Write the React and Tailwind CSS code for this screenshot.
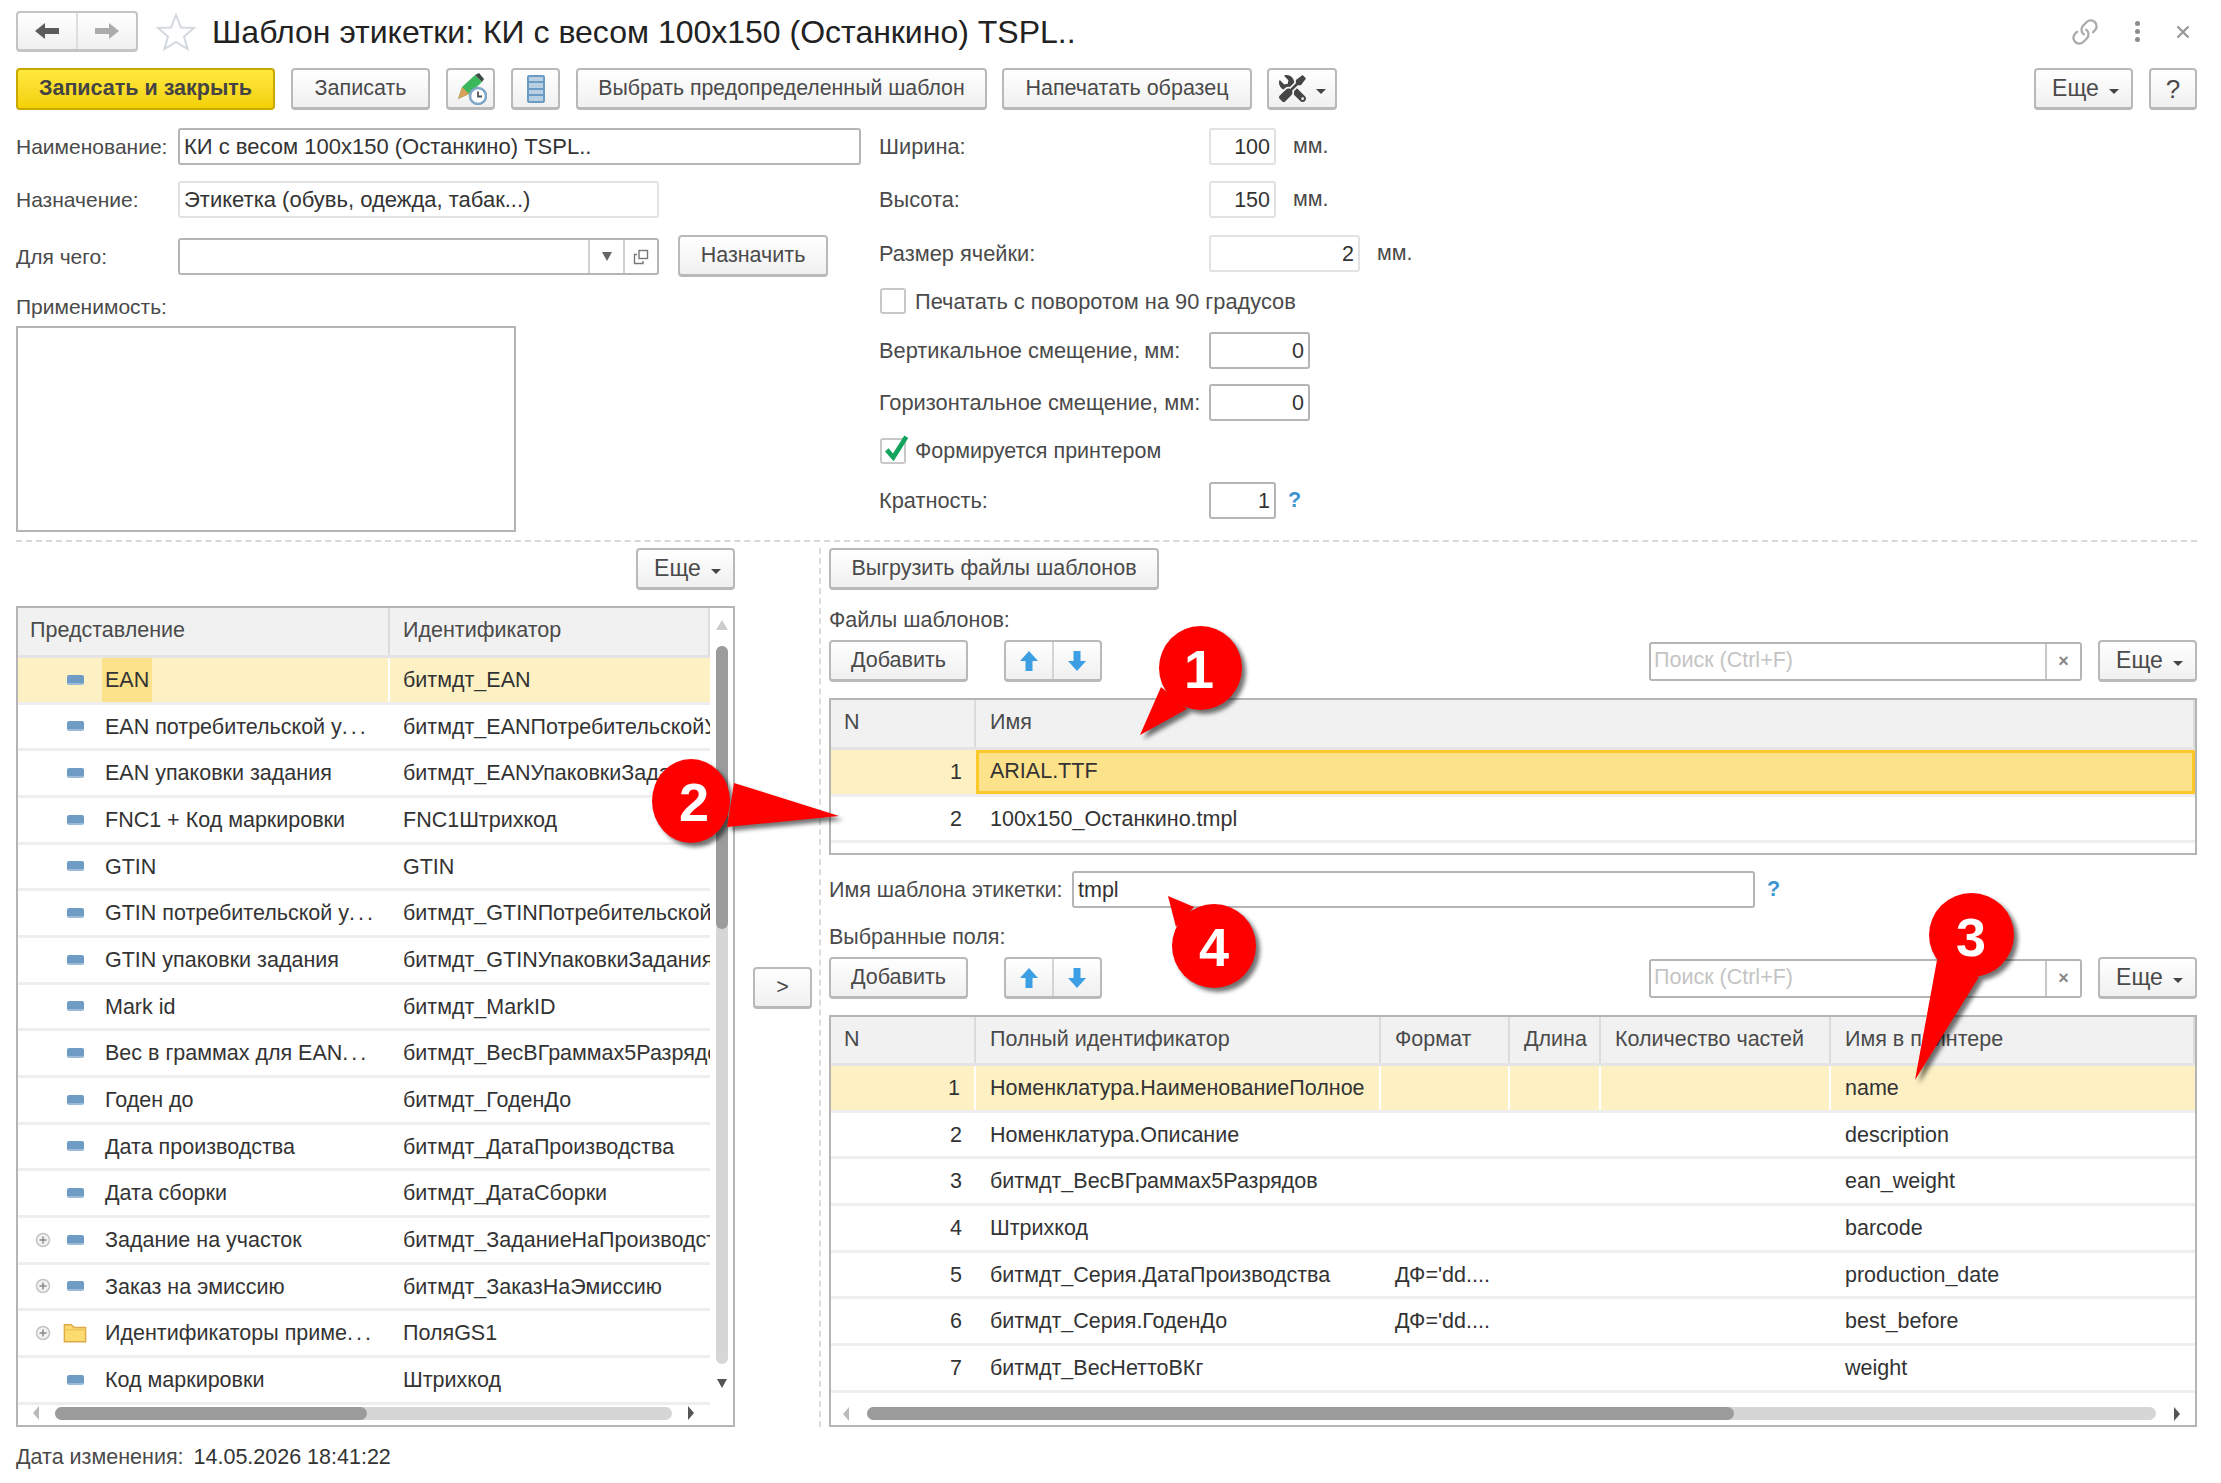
import { Link } from 'lucide-react';
import { FaTools } from 'react-icons/fa';

const leftRows = [
  { name: 'EAN', id: 'битмдт_EAN' },
  { name: 'EAN потребительской у...', id: 'битмдт_EANПотребительскойУпаковки' },
  { name: 'EAN упаковки задания', id: 'битмдт_EANУпаковкиЗадания' },
  { name: 'FNC1 + Код маркировки', id: 'FNC1Штрихкод' },
  { name: 'GTIN', id: 'GTIN' },
  { name: 'GTIN потребительской у...', id: 'битмдт_GTINПотребительскойУпаковки' },
  { name: 'GTIN упаковки задания', id: 'битмдт_GTINУпаковкиЗадания' },
  { name: 'Mark id', id: 'битмдт_MarkID' },
  { name: 'Вес в граммах для EAN...', id: 'битмдт_ВесВГраммах5Разрядов' },
  { name: 'Годен до', id: 'битмдт_ГоденДо' },
  { name: 'Дата производства', id: 'битмдт_ДатаПроизводства' },
  { name: 'Дата сборки', id: 'битмдт_ДатаСборки' },
  { name: 'Задание на участок', id: 'битмдт_ЗаданиеНаПроизводство', plus: true },
  { name: 'Заказ на эмиссию', id: 'битмдт_ЗаказНаЭмиссию', plus: true },
  { name: 'Идентификаторы приме...', id: 'ПоляGS1', plus: true, folder: true },
  { name: 'Код маркировки', id: 'Штрихкод' },
];

const fieldRows = [
  { n: 1, full: 'Номенклатура.НаименованиеПолное', fmt: '', printer: 'name' },
  { n: 2, full: 'Номенклатура.Описание', fmt: '', printer: 'description' },
  { n: 3, full: 'битмдт_ВесВГраммах5Разрядов', fmt: '', printer: 'ean_weight' },
  { n: 4, full: 'Штрихкод', fmt: '', printer: 'barcode' },
  { n: 5, full: 'битмдт_Серия.ДатаПроизводства', fmt: "ДФ='dd....", printer: 'production_date' },
  { n: 6, full: 'битмдт_Серия.ГоденДо', fmt: "ДФ='dd....", printer: 'best_before' },
  { n: 7, full: 'битмдт_ВесНеттоВКг', fmt: '', printer: 'weight' },
];

function Btn({ className = '', children }) {
  return (
    <div className={`flex items-center justify-center h-[42px] shrink-0 rounded-[4px] border-2 border-b-[3px] border-[#b9b9b9] bg-linear-to-b from-white to-[#f0f0f0] text-[#4a4a4a] ${className}`}>
      {children}
    </div>
  );
}

function Caret() {
  return <span className="ml-[10px] mt-[5px] w-0 h-0 border-x-[5px] border-x-transparent border-t-[5px] border-t-[#444]" />;
}

function MoreBtn({ className = '' }) {
  return <Btn className={`w-[99px] pl-[4px] text-[23px] ${className}`}>Еще<Caret /></Btn>;
}

function Field({ className = '', dark, right, children }) {
  return (
    <div className={`flex items-center h-[37px] shrink-0 rounded-[3px] border-2 bg-white px-[4px] text-[#333] whitespace-nowrap ${dark ? 'border-[#b5b5b5]' : 'border-[#e2e2e2]'} ${right ? 'justify-end' : ''} ${className}`}>
      {children}
    </div>
  );
}

function Checkbox({ checked }) {
  return (
    <div className="relative w-[26px] h-[26px] shrink-0 rounded-[3px] border-2 border-[#c8c8c8] bg-white">
      {checked && (
        <svg className="absolute left-[2px] top-[-7px]" width="26" height="30" viewBox="0 0 28 30">
          <path d="M3 17 L10 25 L24 3" fill="none" stroke="#12a35c" strokeWidth="5" />
        </svg>
      )}
    </div>
  );
}

function RightRow({ label, width, unit, value, dark, help }) {
  return (
    <div className="flex items-center h-[37px]">
      <span className="w-[330px] shrink-0 pt-[1px] text-[21.8px] whitespace-nowrap text-[#4a4a4a]">{label}</span>
      <Field className={`${width} pt-[2px]`} dark={dark} right>{value}</Field>
      {unit && <span className="ml-[17px] pt-[1px] text-[#4a4a4a]">{unit}</span>}
      {help && <span className="ml-[12px] font-bold text-[#3d94d1]">?</span>}
    </div>
  );
}

function Triangle({ dir, color = '#bbb' }) {
  if (dir === 'up') return <span className="block w-0 h-0 border-x-[6px] border-x-transparent border-b-[10px]" style={{ borderBottomColor: color }} />;
  if (dir === 'down') return <span className="block w-0 h-0 border-x-[5px] border-x-transparent border-t-[9px]" style={{ borderTopColor: color }} />;
  if (dir === 'left') return <span className="block w-0 h-0 border-y-[7px] border-y-transparent border-r-[6px]" style={{ borderRightColor: color }} />;
  return <span className="block w-0 h-0 border-y-[7px] border-y-transparent border-l-[6px]" style={{ borderLeftColor: color }} />;
}

function ArrowPair() {
  return (
    <div className="flex h-[42px] w-[98px] shrink-0 rounded-[4px] border-2 border-b-[3px] border-[#b9b9b9] bg-linear-to-b from-white to-[#f0f0f0]">
      <div className="flex-1 flex items-center justify-center border-r-2 border-[#d4d4d4]">
        <svg width="22" height="22" viewBox="0 0 22 22"><path d="M11 1 L20 11 L14.5 11 L14.5 21 L7.5 21 L7.5 11 L2 11 Z" fill="#3d9fe3" /></svg>
      </div>
      <div className="flex-1 flex items-center justify-center">
        <svg width="22" height="22" viewBox="0 0 22 22"><path d="M11 21 L20 11 L14.5 11 L14.5 1 L7.5 1 L7.5 11 L2 11 Z" fill="#3d9fe3" /></svg>
      </div>
    </div>
  );
}

function TableToolbar() {
  return (
    <div className="flex items-center mt-[8px] h-[42px]">
      <Btn className="w-[139px]">Добавить</Btn>
      <div className="ml-[36px]"><ArrowPair /></div>
      <div className="ml-auto flex items-center h-[39px] w-[433px] rounded-[3px] border-2 border-[#b5b5b5] bg-white">
        <span className="flex-1 pl-[3px] text-[#c4c4c4]">Поиск (Ctrl+F)</span>
        <span className="flex items-center justify-center w-[35px] h-full border-l-2 border-[#c8c8c8] text-[18px] font-bold text-[#888]">×</span>
      </div>
      <MoreBtn className="ml-[16px]" />
    </div>
  );
}

function HScroll({ padLeft, gap, trackWidth, thumbWidth, className = '' }) {
  return (
    <div className={`flex items-center h-[13px] ${className}`} style={{ paddingLeft: padLeft, gap }}>
      <Triangle dir="left" />
      <div className="h-[13px] rounded-full bg-[#d6d6d6]" style={{ width: trackWidth }}>
        <div className="h-[13px] rounded-full bg-[#9b9b9b]" style={{ width: thumbWidth }} />
      </div>
      <Triangle dir="right" color="#555" />
    </div>
  );
}

function HeadCell({ className = '', children }) {
  return (
    <div className={`flex items-center h-full shrink-0 px-[14px] border-r-2 border-[#dcdcdc] text-[#4a4a4a] whitespace-nowrap overflow-hidden ${className}`}>
      {children}
    </div>
  );
}

function Cell({ className = '', children }) {
  return (
    <div className={`flex items-center h-full shrink-0 px-[14px] pt-[2px] text-[#333] whitespace-nowrap overflow-hidden ${className}`}>
      {children}
    </div>
  );
}

function LeftRow({ row, selected }) {
  // в оригинале многоточие заметно шире обычного
  const cut = row.name.endsWith('...');
  return (
    <div className="flex h-[46.67px] shrink-0 border-b-[3px] border-[#eeeeee]">
      <div className={`relative flex items-center w-[372px] shrink-0 h-full border-r-2 ${selected ? 'bg-[#fdf1c4] border-white' : 'border-transparent'}`}>
        <div className="w-[16px] ml-[17px] flex justify-center">
          {row.plus && (
            <svg width="16" height="16" viewBox="0 0 16 16">
              <circle cx="8" cy="8" r="6.5" fill="#f2f2f2" stroke="#c4c4c4" strokeWidth="1.5" />
              <path d="M4.5 8 H11.5 M8 4.5 V11.5" stroke="#8a8a8a" strokeWidth="1.5" />
            </svg>
          )}
        </div>
        <div className="w-[24px] ml-[12px] flex justify-center">
          {row.folder ? (
            <svg width="26" height="22" viewBox="0 0 26 22">
              <path d="M1.5 20.5 V2 H9 L12 5 H24.5 V20.5 Z" fill="#fcdc6e" stroke="#dda94a" strokeWidth="1.6" />
              <path d="M1.5 7.5 H24.5" stroke="#eec35e" strokeWidth="1.4" />
            </svg>
          ) : (
            <span className="block w-[17px] h-[10px] rounded-[2px] bg-[#6f9cc4] border-b-2 border-[#9dbbd6]" />
          )}
        </div>
        <span className={`ml-[15px] flex items-center h-full px-[3px] pt-[2px] whitespace-pre text-[#333] ${selected ? 'bg-[#fde28c]' : ''}`}>
          {cut ? row.name.slice(0, -3) : row.name}
          {cut && <span className="tracking-[3px]">...</span>}
        </span>
      </div>
      <Cell className={`w-[320px] pl-[13px] ${selected ? 'bg-[#fdf1c4]' : ''}`}>{row.id}</Cell>
    </div>
  );
}

function FieldRow({ row, selected }) {
  const bg = selected ? 'bg-[#fdf1c4] border-r-2 border-white' : '';
  return (
    <div className="flex h-[46.67px] shrink-0 border-b-[3px] border-[#eeeeee]">
      <Cell className={`w-[145px] justify-end ${bg}`}>{row.n}</Cell>
      <Cell className={`w-[405px] ${bg}`}>{row.full}</Cell>
      <Cell className={`w-[129px] ${bg}`}>{row.fmt}</Cell>
      <Cell className={`w-[91px] ${bg}`} />
      <Cell className={`w-[230px] ${bg}`} />
      <Cell className={`flex-1 ${selected ? 'bg-[#fdf1c4]' : ''}`}>{row.printer}</Cell>
    </div>
  );
}

function Callouts() {
  return (
    <>
      <svg className="absolute left-0 top-0 pointer-events-none drop-shadow-[4px_4px_2px_rgba(0,0,0,0.55)]" width="2221" height="1483" viewBox="0 0 2221 1483">
        <g fill="#ff0000">
          <ellipse cx="1200.5" cy="668" rx="41.5" ry="42" />
          <path d="M1161 687 L1140 735 L1187 709 Z" />
          <ellipse cx="691" cy="801" rx="39" ry="42" />
          <path d="M734 783 L839 816 L727 827 Z" />
          <ellipse cx="1214" cy="946" rx="42" ry="42" />
          <path d="M1194 907 L1168 896 L1176 927 Z" />
          <ellipse cx="1971.5" cy="935" rx="42.5" ry="42" />
          <path d="M1937 960 L1915 1080 L1979 977 Z" />
        </g>
      </svg>
      <span className="absolute left-[1199px] top-[669px] -translate-x-1/2 -translate-y-1/2 text-[54px] font-bold text-white">1</span>
      <span className="absolute left-[694px] top-[802px] -translate-x-1/2 -translate-y-1/2 text-[54px] font-bold text-white">2</span>
      <span className="absolute left-[1971px] top-[937px] -translate-x-1/2 -translate-y-1/2 text-[54px] font-bold text-white">3</span>
      <span className="absolute left-[1214px] top-[947px] -translate-x-1/2 -translate-y-1/2 text-[54px] font-bold text-white">4</span>
    </>
  );
}

function App() {
  return (
    <div className="relative w-[2221px] h-[1483px] overflow-hidden bg-white pl-[16px] pr-[24px] pt-[11px] font-['Liberation_Sans',Arial,sans-serif] text-[21.5px] leading-none">
      {/* Заголовок */}
      <div className="flex items-center h-[41px]">
        <div className="flex w-[122px] h-[41px] rounded-[4px] border-2 border-b-[3px] border-[#c4c4c4] bg-linear-to-b from-white to-[#f0f0f0]">
          <div className="flex-1 flex items-center justify-center border-r-2 border-[#dedede]">
            <svg width="26" height="18" viewBox="0 0 26 18"><path d="M1 9 L11 1 V6 H25 V12 H11 V17 Z" fill="#5c5c5c" /></svg>
          </div>
          <div className="flex-1 flex items-center justify-center">
            <svg width="26" height="18" viewBox="0 0 26 18"><path d="M25 9 L15 1 V6 H1 V12 H15 V17 Z" fill="#ababab" /></svg>
          </div>
        </div>
        <svg className="ml-[18px]" width="40" height="38" viewBox="0 0 40 38">
          <path d="M20 2 L25 14.5 L38 15 L28 23.5 L31.5 36 L20 29 L8.5 36 L12 23.5 L2 15 L15 14.5 Z" fill="#fff" stroke="#d3d9df" strokeWidth="2" />
        </svg>
        <span className="ml-[16px] text-[32px] text-[#222] whitespace-nowrap">Шаблон этикетки: КИ с весом 100х150 (Останкино) TSPL..</span>
        <div className="ml-auto flex items-center">
          <Link size={28} strokeWidth={2} className="text-[#aaa] -scale-x-100 rotate-90" />
          <div className="ml-[36px] flex flex-col gap-[3px]">
            <span className="w-[5px] h-[5px] rounded-full bg-[#8c8c8c]" />
            <span className="w-[5px] h-[5px] rounded-full bg-[#8c8c8c]" />
            <span className="w-[5px] h-[5px] rounded-full bg-[#8c8c8c]" />
          </div>
          <svg className="ml-[36px] mr-[7px]" width="14" height="14" viewBox="0 0 14 14"><path d="M1.5 1.5 L12.5 12.5 M12.5 1.5 L1.5 12.5" stroke="#999" strokeWidth="2.4" /></svg>
        </div>
      </div>

      {/* Кнопки */}
      <div className="flex items-center h-[42px] mt-[16px]">
        <div className="flex items-center justify-center w-[259px] h-[42px] rounded-[4px] border-2 border-[#c9a800] bg-linear-to-b from-[#ffe93c] to-[#f4d000] font-bold text-[#444]">Записать и закрыть</div>
        <Btn className="ml-[16px] w-[139px]">Записать</Btn>
        <Btn className="ml-[16px] w-[49px]">
          <svg width="32" height="32" viewBox="0 0 32 32">
            <path d="M3 26 L7 14 L20 2 L27 9 L14 21 Z" fill="#3cb85c" />
            <path d="M20 2 L24 0 L29 6 L27 9 Z" fill="#3d4a44" />
            <path d="M3 26 L7 14 L14 21 Z" fill="#d9a15a" />
            <circle cx="23" cy="23" r="8" fill="#fff" stroke="#7fa6c6" strokeWidth="2.5" />
            <path d="M23 18.5 V23.5 H27" fill="none" stroke="#555" strokeWidth="1.8" />
          </svg>
        </Btn>
        <Btn className="ml-[16px] w-[49px]">
          <div className="flex flex-col gap-[2px] w-[18px] h-[28px] p-[2px] rounded-[2px] bg-[#6b9bc4]">
            <span className="flex-1 bg-[#b9cfe2]" />
            <span className="flex-1 bg-[#b9cfe2]" />
            <span className="flex-1 bg-[#b9cfe2]" />
            <span className="flex-1 bg-[#b9cfe2]" />
          </div>
        </Btn>
        <Btn className="ml-[16px] w-[411px] text-[21.3px]">Выбрать предопределенный шаблон</Btn>
        <Btn className="ml-[15px] w-[250px]">Напечатать образец</Btn>
        <Btn className="ml-[15px] w-[70px]"><FaTools size={27} className="text-[#454545] -scale-x-100" /><Caret /></Btn>
        <MoreBtn className="ml-auto" />
        <Btn className="ml-[16px] w-[48px] text-[26px]">?</Btn>
      </div>

      {/* Реквизиты */}
      <div className="flex mt-[18px] h-[404px]">
        <div className="w-[863px] shrink-0 text-[22px]">
          <div className="flex items-center">
            <span className="w-[162px] shrink-0 text-[21px] text-[#4a4a4a]">Наименование:</span>
            <Field className="w-[683px]" dark>КИ с весом 100х150 (Останкино) TSPL..</Field>
          </div>
          <div className="flex items-center mt-[16px]">
            <span className="w-[162px] shrink-0 text-[21px] text-[#4a4a4a]">Назначение:</span>
            <Field className="w-[481px]">Этикетка (обувь, одежда, табак...)</Field>
          </div>
          <div className="flex items-start mt-[17px] h-[42px]">
            <span className="w-[162px] shrink-0 text-[21px] text-[#4a4a4a] mt-[11px]">Для чего:</span>
            <div className="flex items-stretch mt-[3px] w-[481px] h-[37px] rounded-[3px] border-2 border-[#b5b5b5] bg-white">
              <div className="flex-1" />
              <div className="flex items-center justify-center w-[35px] border-l-2 border-[#d0d0d0]"><Triangle dir="down" color="#666" /></div>
              <div className="flex items-center justify-center w-[34px] border-l-2 border-[#d0d0d0]">
                <svg width="16" height="16" viewBox="0 0 16 16" fill="none" stroke="#777" strokeWidth="1.4">
                  <rect x="6" y="1.5" width="8.5" height="8" />
                  <path d="M4 5.5 H1.5 V14.5 H10 V12" />
                </svg>
              </div>
            </div>
            <Btn className="ml-[19px] w-[150px] text-[21.5px]">Назначить</Btn>
          </div>
          <div className="mt-[17px] h-[24px] flex items-center text-[21px] text-[#4a4a4a]">Применимость:</div>
          <div className="mt-[8px] w-[500px] h-[206px] border-2 border-[#b5b5b5] bg-white" />
        </div>
        <div className="flex-1">
          <RightRow label="Ширина:" width="w-[67px]" value="100" unit="мм." />
          <div className="mt-[16px]"><RightRow label="Высота:" width="w-[67px]" value="150" unit="мм." /></div>
          <div className="mt-[17px]"><RightRow label="Размер ячейки:" width="w-[151px]" value="2" unit="мм." /></div>
          <div className="flex items-center gap-[9px] mt-[16px] h-[26px] ml-[1px] text-[21.8px] text-[#4a4a4a]"><Checkbox /><span className="pt-[2px]">Печатать с поворотом на 90 градусов</span></div>
          <div className="mt-[18px]"><RightRow label="Вертикальное смещение, мм:" width="w-[101px]" value="0" dark /></div>
          <div className="mt-[15px]"><RightRow label="Горизонтальное смещение, мм:" width="w-[101px]" value="0" dark /></div>
          <div className="flex items-center gap-[9px] mt-[17px] h-[26px] ml-[1px] text-[#4a4a4a]"><Checkbox checked /><span className="pt-[2px]">Формируется принтером</span></div>
          <div className="mt-[18px]"><RightRow label="Кратность:" width="w-[67px]" value="1" dark help /></div>
        </div>
      </div>

      <div className="mt-[8px] border-t-2 border-dashed border-[#d8d8d8]" />

      {/* Таблицы */}
      <div className="flex mt-[6px] h-[879px]">
        <div className="w-[719px] shrink-0">
          <div className="flex justify-end"><MoreBtn /></div>
          <div className="flex mt-[16px] h-[821px] border-2 border-[#b5b5b5]">
            <div className="flex flex-col w-[692px] shrink-0">
              <div className="flex h-[50px] shrink-0 border-b-[3px] border-[#e4e4e4] bg-[#f1f1f1]">
                <HeadCell className="w-[372px] pl-[12px] pb-[2px]">Представление</HeadCell>
                <HeadCell className="w-[320px] pl-[13px] pb-[2px] border-r-0">Идентификатор</HeadCell>
              </div>
              {leftRows.map((row, i) => (
                <LeftRow key={row.name} row={row} selected={i === 0} />
              ))}
              <HScroll className="mt-[2px]" padLeft={15} gap={16} trackWidth={617} thumbWidth={312} />
            </div>
            <div className="flex flex-col items-center flex-1">
              <div className="mt-[12px]"><Triangle dir="up" color="#ccc" /></div>
              <div className="mt-[16px] w-[12px] h-[718px] rounded-full bg-[#d6d6d6]">
                <div className="h-[283px] rounded-full bg-[#9b9b9b]" />
              </div>
              <div className="mt-[15px]"><Triangle dir="down" color="#555" /></div>
            </div>
          </div>
        </div>

        <div className="w-[86px] shrink-0 border-r-2 border-dashed border-[#dcdcdc]">
          <Btn className="ml-[18px] mt-[419px] w-[59px]">&gt;</Btn>
        </div>

        <div className="ml-[8px] w-[1368px] shrink-0">
          <Btn className="w-[330px]">Выгрузить файлы шаблонов</Btn>
          <div className="mt-[18px] h-[24px] pt-[2px] flex items-center text-[#4a4a4a]">Файлы шаблонов:</div>
          <TableToolbar />
          <div className="mt-[16px] h-[157px] border-2 border-[#b5b5b5]">
            <div className="flex h-[50px] border-b-[3px] border-[#e4e4e4] bg-[#f1f1f1]">
              <HeadCell className="w-[145px] pl-[13px] pb-[2px]">N</HeadCell>
              <HeadCell className="flex-1 pb-[2px] border-r-0">Имя</HeadCell>
            </div>
            <div className="flex h-[46.67px] border-b-[3px] border-[#eeeeee]">
              <Cell className="w-[145px] justify-end bg-[#fdf1c4]">1</Cell>
              <div className="flex flex-1 items-center h-full pl-[11px] bg-[#fde28c] border-[3px] border-[#fdc92a] text-[#333]">ARIAL.TTF</div>
            </div>
            <div className="flex h-[46.67px] border-b-[3px] border-[#eeeeee]">
              <Cell className="w-[145px] justify-end">2</Cell>
              <Cell className="flex-1">100x150_Останкино.tmpl</Cell>
            </div>
          </div>
          <div className="flex items-center mt-[16px]">
            <span className="w-[243px] shrink-0 pt-[2px] text-[#4a4a4a]">Имя шаблона этикетки:</span>
            <Field className="w-[683px] pt-[2px]" dark>tmpl</Field>
            <span className="ml-[12px] font-bold text-[#3d94d1]">?</span>
          </div>
          <div className="mt-[17px] h-[24px] pt-[2px] flex items-center text-[#4a4a4a]">Выбранные поля:</div>
          <TableToolbar />
          <div className="flex flex-col mt-[16px] h-[412px] border-2 border-[#b5b5b5]">
            <div className="flex h-[49px] shrink-0 border-b-[3px] border-[#e4e4e4] bg-[#f1f1f1]">
              <HeadCell className="w-[145px] pl-[13px]">N</HeadCell>
              <HeadCell className="w-[405px]">Полный идентификатор</HeadCell>
              <HeadCell className="w-[129px]">Формат</HeadCell>
              <HeadCell className="w-[91px]">Длина</HeadCell>
              <HeadCell className="w-[230px]">Количество частей</HeadCell>
              <HeadCell className="flex-1 border-r-0">Имя в принтере</HeadCell>
            </div>
            {fieldRows.map((row, i) => (
              <FieldRow key={row.n} row={row} selected={i === 0} />
            ))}
            <HScroll className="mt-auto mb-[5px]" padLeft={12} gap={18} trackWidth={1289} thumbWidth={867} />
          </div>
        </div>
      </div>

      <div className="flex items-center mt-[17px] h-[28px] text-[#4a4a4a]">
        <span>Дата изменения:</span>
        <span className="ml-[10px] text-[#333]">14.05.2026 18:41:22</span>
      </div>

      <Callouts />
    </div>
  );
}

export default App;
